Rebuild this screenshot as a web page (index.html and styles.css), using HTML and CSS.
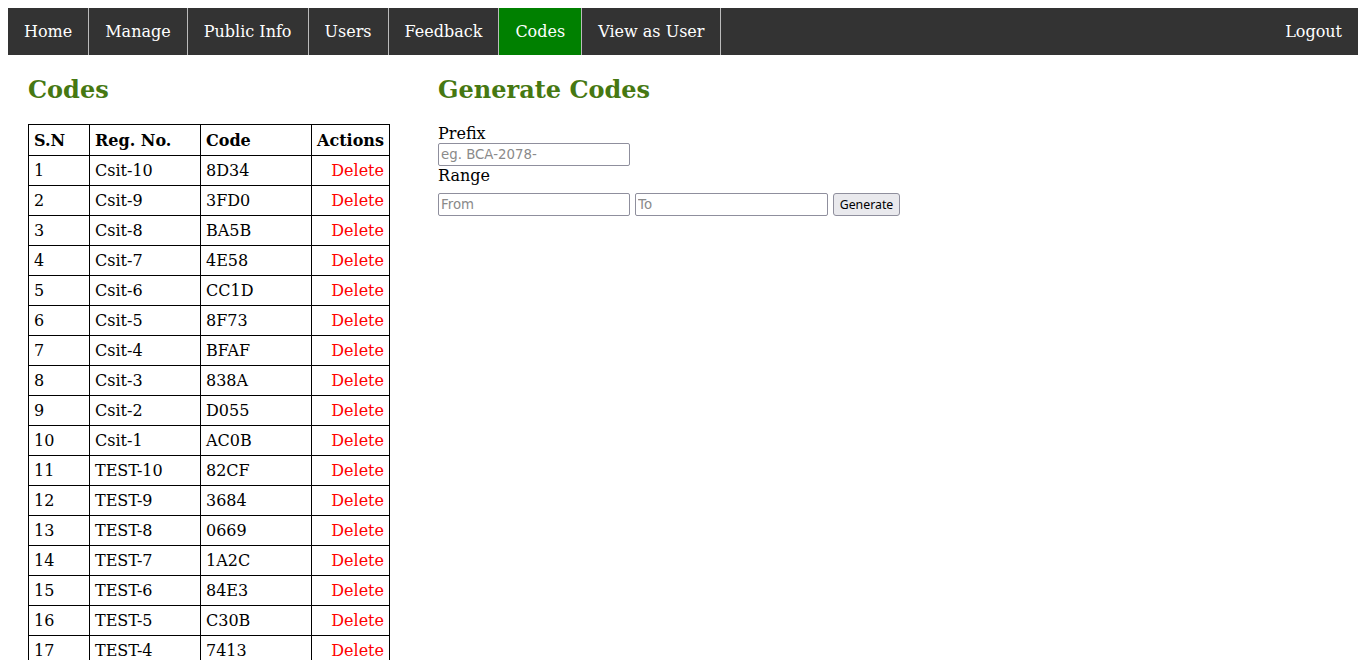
FILE: index.html
```html
<!DOCTYPE html>
<html>
<head>
<meta charset="utf-8">
<title>Codes</title>
<link rel="stylesheet" href="styles.css">
</head>
<body>
<ul class="nav">
  <li><a href="#">Home</a></li>
  <li><a href="#">Manage</a></li>
  <li><a href="#">Public Info</a></li>
  <li><a href="#">Users</a></li>
  <li><a href="#">Feedback</a></li>
  <li class="active"><a href="#">Codes</a></li>
  <li><a href="#">View as User</a></li>
  <li class="right"><a href="#">Logout</a></li>
</ul>
<div class="main">
  <section class="left">
    <h2>Codes</h2>
    <table class="codes">
      <colgroup>
        <col class="c-sn"><col class="c-reg"><col class="c-code"><col class="c-act">
      </colgroup>
      <thead>
        <tr><th>S.N</th><th>Reg. No.</th><th>Code</th><th>Actions</th></tr>
      </thead>
      <tbody>
        <tr><td>1</td><td>Csit-10</td><td>8D34</td><td class="act"><a href="#">Delete</a></td></tr>
        <tr><td>2</td><td>Csit-9</td><td>3FD0</td><td class="act"><a href="#">Delete</a></td></tr>
        <tr><td>3</td><td>Csit-8</td><td>BA5B</td><td class="act"><a href="#">Delete</a></td></tr>
        <tr><td>4</td><td>Csit-7</td><td>4E58</td><td class="act"><a href="#">Delete</a></td></tr>
        <tr><td>5</td><td>Csit-6</td><td>CC1D</td><td class="act"><a href="#">Delete</a></td></tr>
        <tr><td>6</td><td>Csit-5</td><td>8F73</td><td class="act"><a href="#">Delete</a></td></tr>
        <tr><td>7</td><td>Csit-4</td><td>BFAF</td><td class="act"><a href="#">Delete</a></td></tr>
        <tr><td>8</td><td>Csit-3</td><td>838A</td><td class="act"><a href="#">Delete</a></td></tr>
        <tr><td>9</td><td>Csit-2</td><td>D055</td><td class="act"><a href="#">Delete</a></td></tr>
        <tr><td>10</td><td>Csit-1</td><td>AC0B</td><td class="act"><a href="#">Delete</a></td></tr>
        <tr><td>11</td><td>TEST-10</td><td>82CF</td><td class="act"><a href="#">Delete</a></td></tr>
        <tr><td>12</td><td>TEST-9</td><td>3684</td><td class="act"><a href="#">Delete</a></td></tr>
        <tr><td>13</td><td>TEST-8</td><td>0669</td><td class="act"><a href="#">Delete</a></td></tr>
        <tr><td>14</td><td>TEST-7</td><td>1A2C</td><td class="act"><a href="#">Delete</a></td></tr>
        <tr><td>15</td><td>TEST-6</td><td>84E3</td><td class="act"><a href="#">Delete</a></td></tr>
        <tr><td>16</td><td>TEST-5</td><td>C30B</td><td class="act"><a href="#">Delete</a></td></tr>
        <tr><td>17</td><td>TEST-4</td><td>7413</td><td class="act"><a href="#">Delete</a></td></tr>
        <tr><td>18</td><td>TEST-3</td><td>5B9E</td><td class="act"><a href="#">Delete</a></td></tr>
        <tr><td>19</td><td>TEST-2</td><td>E21A</td><td class="act"><a href="#">Delete</a></td></tr>
        <tr><td>20</td><td>TEST-1</td><td>96DC</td><td class="act"><a href="#">Delete</a></td></tr>
      </tbody>
    </table>
  </section>
  <section class="right-col">
    <h2>Generate Codes</h2>
    <form class="gen">
      <label class="lbl">Prefix</label>
      <input class="field" type="text" placeholder="eg. BCA-2078-">
      <label class="lbl">Range</label>
      <div class="range">
        <input class="field" type="number" placeholder="From">
        <input class="field" type="number" placeholder="To">
        <button class="btn" type="button">Generate</button>
      </div>
    </form>
  </section>
</div>
</body>
</html>
```
FILE: styles.css
```css
html, body {
  background: #fff;
}
body {
  margin: 8px;
  font-family: "DejaVu Serif", serif;
  font-size: 16px;
  color: #000;
}
.nav {
  list-style: none;
  margin: 0;
  padding: 0;
  display: flex;
  background: #333;
}
.nav li {
  border-right: 1px solid #bbb;
}
.nav li.right {
  margin-left: auto;
  border-right: none;
}
.nav li a {
  display: block;
  color: #fff;
  text-align: center;
  padding: 14px 16px;
  text-decoration: none;
}
.nav li.active {
  background: #008000;
}
.main {
  display: flex;
  padding: 0 20px;
}
.left {
  width: 410px;
  flex: none;
}
.right-col {
  flex: 1;
}
h2 {
  font-size: 24px;
  font-weight: bold;
  color: #467812;
  margin: 20px 0 20px;
}
.codes {
  border-collapse: collapse;
  table-layout: fixed;
  width: 361px;
}
.c-sn { width: 61px; }
.c-reg { width: 111px; }
.c-code { width: 111px; }
.c-act { width: 78px; }
.codes th, .codes td {
  border: 1px solid #000;
  padding: 5px;
  text-align: left;
  white-space: nowrap;
}
.codes th {
  padding-top: 6px;
}
.codes td.act {
  text-align: right;
}
.codes td.act a {
  color: #f00;
  text-decoration: none;
}
.gen {
  margin: 0;
}
.lbl {
  display: block;
}
.field {
  font-family: "DejaVu Sans", sans-serif;
  font-size: 13.33px;
  width: 192px;
  height: 23px;
  box-sizing: border-box;
  padding: 1px 2px;
  border: 1px solid #8f8f9d;
  border-radius: 2px;
  margin: 0;
  -moz-appearance: textfield;
  appearance: textfield;
}
.field::placeholder {
  color: #8a8a8a;
}
.field::-webkit-inner-spin-button,
.field::-webkit-outer-spin-button {
  -webkit-appearance: none;
  margin: 0;
}
.range {
  display: flex;
  gap: 5px;
  margin-top: 8px;
}
.range .field + .field {
  width: 193px;
}
.btn {
  font-family: "Noto Sans", "DejaVu Sans", sans-serif;
  font-size: 12.3px;
  height: 23px;
  width: 67px;
  padding: 0 4px;
  border: 1px solid #8f8f9d;
  border-radius: 3px;
  background: #e9e9ed;
  color: #000;
}
```
